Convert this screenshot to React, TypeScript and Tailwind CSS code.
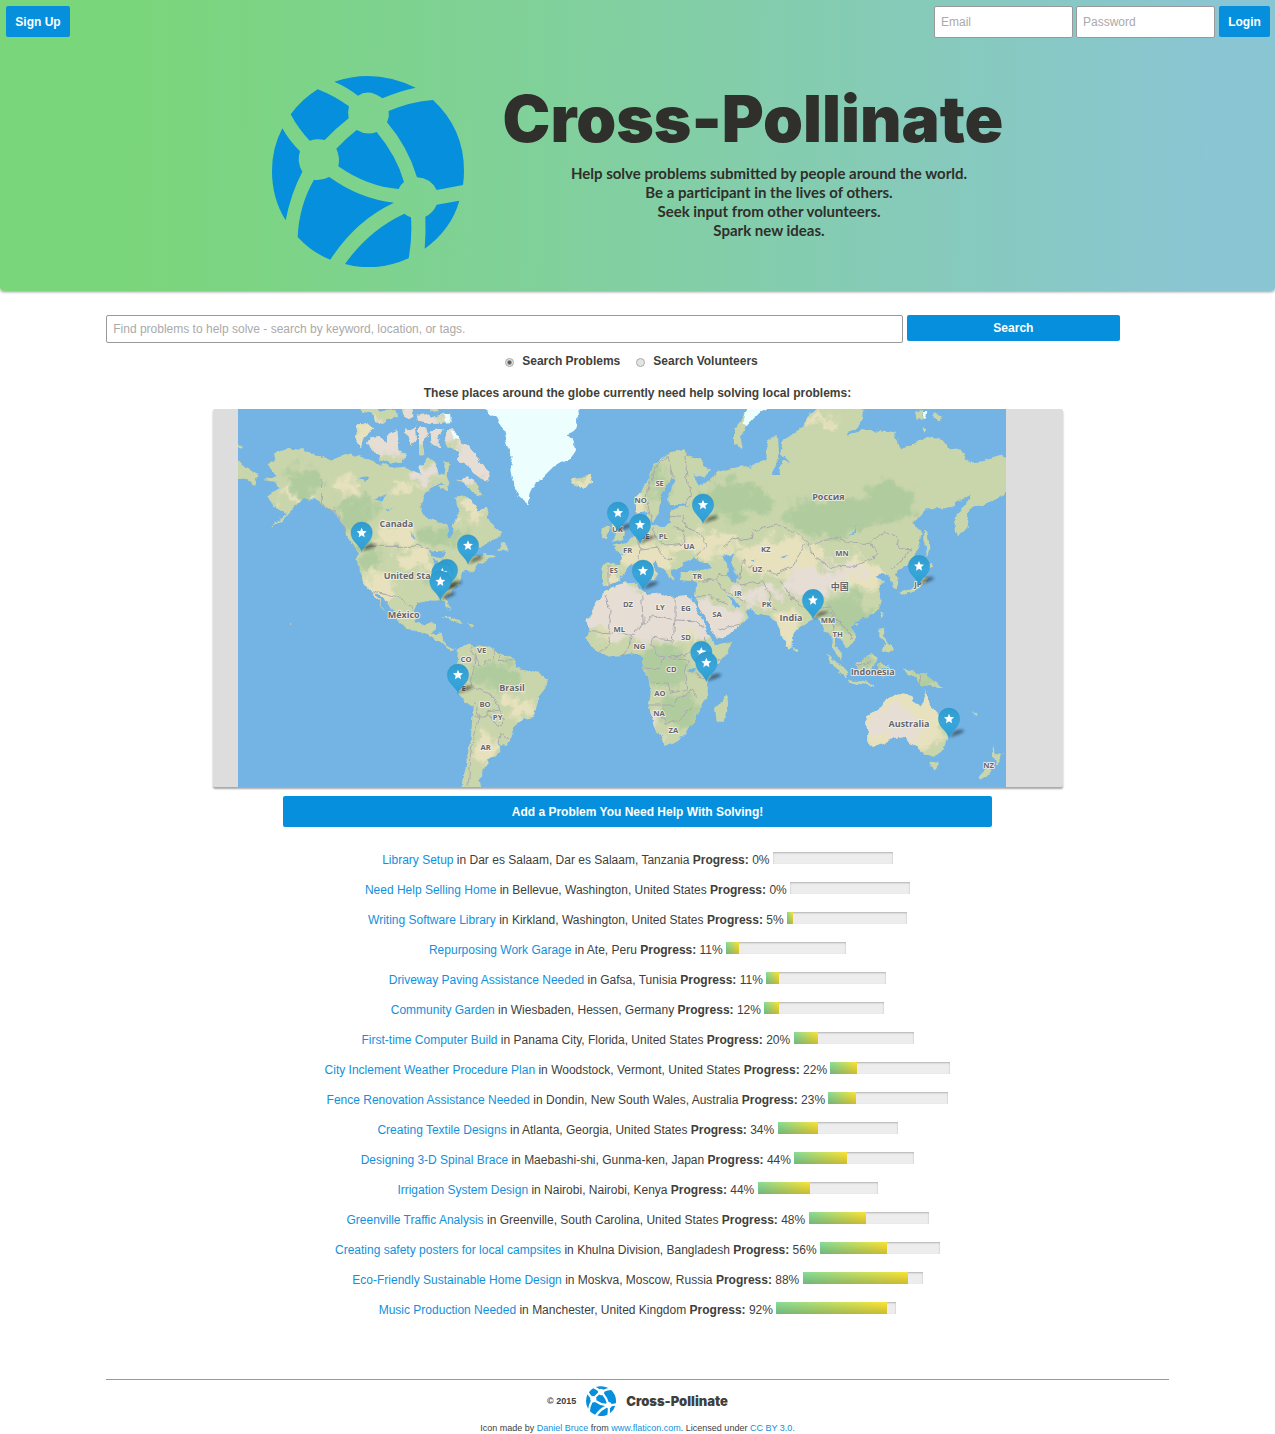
import React from "react";

type Pt = [number, number];

/* ---------- Logo ---------- */

function Globe({ className }: { className?: string }) {
  return (
    <svg viewBox="36 44 576 576" className={className} fill="#058fdd" aria-hidden="true">
      <path d="M223 64Q345 22 467 82Q415 93 367 114Q326 84 294 106Q262 81 223 64Z" />
      <path d="M173 87Q222 106 267 138Q262 155 266 174Q228 204 194 239Q171 234 149 241Q116 207 92 162Q126 116 173 87Z" />
      <path d="M67 204Q88 242 120 273Q109 304 127 334Q92 401 77 480Q36 415 36 332Q36 263 67 204Z" />
      <path d="M519 119Q612 205 612 332Q612 353 609 374L530 389Q512 353 471 351Q444 260 381 186Q389 169 386 152Q452 124 519 119Z" />
      <path d="M290 209Q320 227 350 215Q410 287 432 365Q422 372 416 386Q322 379 235 318Q241 291 229 265Q257 235 290 209Z" />
      <path d="M208 350Q299 416 402 427Q287 480 211 598Q156 577 113 530Q117 436 162 358Q186 361 208 350Z" />
      <path d="M433 460Q443 468 453 471Q457 534 446 594Q350 637 255 611Q326 510 433 460Z" />
      <path d="M530 433L598 421Q574 507 494 565Q498 518 496 469Q520 457 530 433Z" />
    </svg>
  );
}

/* ---------- World map ---------- */

const OFF: Record<string, Pt> = {
  a: [0, 0],
  b: [0, 570],
  c: [954, 0],
  d: [1764, 0],
  e: [1044, 570],
  f: [1764, 570],
};

// "a:x,y x,y b:x,y ..." - a letter moves to that map sheet's origin.
function shape(source: string, close = true) {
  let off = OFF.a;
  const out = source.trim().split(/\s+/).map((tok) => {
    let t = tok;
    if (/^[a-f]:/.test(t)) {
      off = OFF[t[0]];
      t = t.slice(2);
    }
    const [x, y] = t.split(",").map(Number);
    return `${x + off[0]} ${y + off[1]}`;
  });
  return "M" + out.join("L") + (close ? "Z" : "");
}

const LAND = [
  "a:165,190 190,180 182,168 200,155 230,143 265,150 300,160 330,170 360,182 380,172 412,160 430,170 470,178 500,190 540,205 580,200 610,215 632,222 620,205 650,175 672,190 680,225 700,222 690,180 712,195 702,235 712,258 680,250 655,262 640,280 625,320 640,350 680,365 705,380 710,415 722,415 725,375 738,345 728,290 760,285 785,310 800,335 820,318 838,370 870,395 868,415 820,430 795,448 780,470 820,462 850,472 800,492 785,510 750,520 745,545 720,570 698,590 b:702,20 718,60 705,52 695,30 660,32 615,40 605,60 612,95 640,110 660,92 672,98 660,128 692,132 700,165 720,176 738,178 715,184 690,160 670,145 640,130 600,122 560,95 555,80 525,30 500,15 490,10 515,60 525,78 505,45 478,0 a:480,575 450,540 437,500 437,460 430,440 400,400 390,360 350,325 320,305 275,290 245,325 215,360 170,385 225,340 190,325 165,290 200,265 185,245 160,240 190,225",
  "b:738,180 750,165 770,155 790,165 830,170 850,185 880,195 905,210 910,232 950,240 985,252 1005,270 1000,295 980,320 975,350 965,378 935,385 915,400 905,430 890,455 880,468 858,462 865,485 850,500 825,505 830,520 812,535 810,560 800,570 808,620 750,620 755,560 760,540 765,500 775,460 780,400 782,350 750,330 735,300 712,260 715,240 735,210",
  "c:220,550 215,520 220,490 270,492 275,465 248,440 285,430 300,420 320,400 340,385 355,378 350,345 362,345 364,375 400,380 425,365 425,345 415,332 440,322 480,318 450,312 420,312 415,280 438,240 422,235 395,285 390,325 380,345 370,365 357,350 345,330 320,338 315,295 345,260 375,190 420,160 460,148 470,165 510,180 540,215 515,235 490,225 510,262 550,235 560,215 600,205 640,200 690,190 712,175 715,120 740,105 745,170 725,225 748,225 752,185 778,188 750,160 760,120 810,90 d:20,50 80,0 190,0 190,60 140,105 190,90 260,100 285,95 300,145 345,130 380,110 430,120 450,145 490,155 500,185 550,180 600,165 650,185 650,255 612,285 580,300 545,320 520,320 505,345 500,380 475,415 463,380 470,340 500,310 515,285 490,295 450,325 380,325 340,370 365,400 355,440 330,490 290,515 280,520 295,545 290,565 278,560 270,525 245,515 230,530 252,545 235,560 245,600 f:235,60 205,80 170,90 150,105 165,135 160,160 140,175 130,150 105,140 105,165 125,190 128,215 110,195 95,165 95,130 75,125 60,95 45,85 e:745,95 710,120 695,145 695,175 685,178 665,140 650,95 640,90 615,75 570,60 555,65 520,25 500,15 530,55 545,50 568,80 545,105 500,135 470,148 455,115 430,75 412,45 410,20 c:495,590 500,545 450,540 448,520 510,510 540,505 525,485 500,480 490,470 475,480 455,500 425,510 430,545 410,520 375,480 365,492 385,525 370,545 345,500 325,485 290,500 270,540 235,555",
  "e:130,5 150,-5 195,-20 235,-22 240,-5 262,15 300,10 330,22 380,15 395,25 410,60 430,100 455,150 465,165 515,155 500,190 470,225 440,270 445,325 415,355 410,385 390,410 370,440 345,460 312,467 303,440 285,410 265,345 272,310 265,265 245,230 248,200 220,190 185,195 140,200 100,175 78,145 85,120 80,90 110,40",
  "e:500,313 508,335 490,395 470,395 465,355 480,340",
  "f:195,380 240,360 255,335 300,310 340,315 338,335 365,350 377,300 390,345 420,380 445,420 440,450 425,490 400,498 370,495 355,470 335,465 315,440 270,450 235,465 205,468 205,430",
  "f:308,235 340,245 380,255 410,275 430,297 385,285 370,290 350,265 320,250",
  "f:78,195 95,200 118,222 145,250 140,268 110,240",
  "f:145,270 180,274 220,282 218,288 150,278",
  "f:165,225 200,205 218,188 230,205 215,245 180,240",
  "f:235,225 272,226 248,234 256,262 246,262 242,245 234,258",
  "f:238,115 250,115 250,140 275,175 268,190 250,182 258,160 238,140",
  "f:238,70 246,66 242,88",
  "f:160,100 175,96 172,108",
  "e:697,168 710,182 702,190",
  "d:300,582 335,562 362,548 370,530 385,535 365,562 330,575 308,590",
  "d:372,388 382,395 388,440 382,468 374,440",
  "d:372,505 395,488 400,498 380,512",
  "d:345,35 365,30 372,55 350,60",
  "d:400,40 430,52 415,60 400,52",
  "d:365,82 382,90 368,98",
  "f:395,515 415,518 405,542 395,530",
  "f:573,470 590,490 608,492 590,520 582,510",
  "f:560,535 575,540 560,560 540,572 532,565",
  "c:250,350 268,352 262,370 288,405 282,418 245,425 255,405 245,380",
  "c:215,385 240,378 235,410 213,412",
  "c:122,235 150,232 180,228 190,245 160,270 135,262",
  "c:330,482 338,482 336,515 330,510",
  "a:468,130 478,112 505,108 520,130 535,95 556,88 562,150 584,165 560,185 530,192 500,180 505,160 475,150",
  "a:435,70 460,70 487,85 455,112 447,142 432,125",
  "a:448,15 490,15 500,35 550,30 556,48 515,68 490,60 478,40 450,35",
  "a:578,85 600,92 608,82 612,115 598,138 590,112 576,100",
  "a:618,82 645,80 650,105 635,125 640,165 618,168",
  "a:656,100 670,86 690,88 680,110 688,145 660,138",
  "a:700,92 725,88 742,115 752,130 775,138 792,165 808,195 832,215 832,242 805,235 780,215 765,190 740,182 735,158 710,140 695,112",
  "a:735,240 765,232 785,242 815,285 806,290 780,278 760,252",
  "a:615,45 640,40 655,50 695,38 722,62 690,68 650,68 618,62",
  "a:565,15 600,15 604,50 590,58 575,45",
  "a:650,15 680,15 676,34 655,32",
  "a:678,255 700,250 712,270 690,268",
  "a:78,185 110,210 140,230 125,255 100,235 60,240 60,180",
  "a:60,137 92,137 92,145 60,146",
  "a:855,450 878,420 890,455",
  "b:690,82 715,80 752,98 735,98 712,88",
  "b:765,103 790,108 775,114",
  "b:230,98 238,102 234,106",
  "f:512,362 534,374 530,378",
  "c:612,90 640,50 665,10 705,10 650,75 630,110 640,150 612,130",
].map((s) => shape(s)).join("");

const ICE = [
  "a:790,0 820,27 855,50 870,80 880,120 890,150 905,170 895,210 905,260 920,290 950,315 c:0,290 10,260 40,230 70,200 110,185 130,160 135,150 130,120 110,100 135,90 145,60 140,0",
  "a:695,42 714,42 716,62 698,62",
  "c:655,10 730,10 672,55 648,80 640,66",
  "a:715,94 735,98 742,118 728,115",
  "d:368,36 382,36 376,58",
].map((s) => shape(s)).join("");

const WATER = [
  "c:580,470 610,460 600,490 625,530 615,550 595,530 590,490",
  "a:440,235 475,225 468,245",
  "a:485,298 525,282 505,305",
  "a:520,330 545,325 525,335",
  "a:595,390 608,420 600,415",
  "a:650,450 700,455 690,475 660,468",
  "a:665,478 678,482 670,520",
  "a:690,478 715,500 700,505",
  "d:170,370 165,395 138,415 160,395",
  "e:388,235 404,230 402,246 390,245",
  "c:745,468 780,462 760,472",
  "c:662,478 680,476 670,486",
].map((s) => shape(s)).join("");

const BORDERS = [
  "a:328,165 328,310 380,345 400,400",
  "a:437,439 622,439 660,450",
  "a:480,575 555,590 b:575,30 605,60",
  "b:785,165 775,190 790,200 785,235 775,290",
  "b:845,175 840,205 800,225 790,190",
  "b:870,190 862,215 900,212",
  "b:775,290 810,300 850,325 860,360 830,365 825,378 785,378",
  "b:860,360 880,390 858,410 830,375",
  "b:858,462 865,430 890,445",
  "b:788,340 800,380 785,450 775,520 768,590",
  "e:135,15 150,60 145,128 215,135 250,105 245,20",
  "e:345,20 345,90 280,75 250,105",
  "e:345,90 340,150 280,145 275,165 300,200 370,200 430,165 435,140",
  "e:345,90 405,92 430,110",
  "e:80,125 145,128",
  "e:215,135 200,180 190,195",
  "e:145,128 150,160 120,190",
  "e:248,235 300,235 310,205 385,210 375,250 380,300 330,310 325,280 270,275",
  "e:265,345 340,345 350,325 400,300 410,320",
  "e:312,400 312,350",
  "e:315,400 345,395 375,375 400,350",
  "e:430,165 440,200 480,210",
  "e:385,240 440,270",
  "c:365,365 350,300 360,240 385,190 415,170 430,235",
  "c:465,165 470,220 480,290 465,315",
  "c:425,345 460,350 470,385 510,400 530,440 500,465",
  "c:370,385 375,415 410,435 460,430 465,390 430,380",
  "c:320,410 330,450 380,445 400,470 430,480",
  "c:330,450 325,475",
  "c:240,560 240,495",
  "c:580,440 610,415 660,420 665,395 740,375 800,400 d:30,440",
  "c:625,540 640,480 660,500 740,520 790,500 d:10,435",
  "c:505,545 550,540 570,520 600,530 630,555 700,545",
  "c:560,540 580,570 640,600 e:560,45",
  "c:700,545 720,590 e:620,50 650,60",
  "d:20,440 60,425 100,410 160,430 210,430 230,465 160,505 90,500 50,475 20,440",
  "d:210,430 250,395 285,410 300,445 330,450 300,490 270,510",
  "d:-60,540 -20,600 30,630 90,620 110,650",
  "f:90,70 115,90 150,130 155,150",
  "f:95,70 100,130",
  "e:410,20 450,20 500,40",
  "e:475,120 540,105",
  "f:170,228 215,210",
  "f:362,255 362,285",
].map((s) => shape(s, false)).join("");

const DESERT: [number, number, number, number][] = [
  [1310, 640, 190, 85], [1510, 660, 90, 60], [1800, 560, 80, 40], [1860, 515, 120, 20],
  [2050, 970, 80, 50], [530, 120, 60, 50], [640, 90, 90, 60], [640, 225, 40, 25],
  [790, 170, 60, 80], [1330, 960, 15, 45], [1640, 585, 80, 20],
];
const SAND: [number, number, number, number][] = [
  [560, 415, 70, 28], [620, 480, 50, 35], [400, 260, 35, 22], [820, 1050, 35, 40],
  [1470, 430, 120, 30], [1300, 480, 80, 50], [1700, 470, 120, 60], [1720, 680, 45, 60],
  [2050, 960, 140, 110], [1950, 520, 60, 60], [1180, 560, 60, 30], [920, 920, 40, 35],
  [1340, 712, 200, 10], [260, 290, 60, 12], [500, 560, 50, 40], [1240, 310, 50, 50],
  [460, 95, 30, 50], [570, 260, 40, 12], [780, 330, 30, 40], [1115, 250, 30, 20],
  [1820, 65, 50, 14],
];
const GREEN: [number, number, number, number][] = [
  [270, 240, 60, 35], [430, 330, 60, 50], [690, 400, 70, 30], [700, 540, 50, 40],
  [850, 830, 75, 40], [1360, 800, 80, 60], [1560, 300, 110, 55], [1850, 350, 130, 60],
  [2030, 310, 80, 60], [1900, 640, 70, 50], [1400, 930, 60, 50], [1340, 250, 30, 50],
  [2140, 835, 50, 20], [1970, 800, 40, 20], [470, 480, 30, 50],
];

const LABELS: [string, number, number, boolean][] = [
  ["Canada", 553, 382, true], ["United States", 606, 537, true], ["México", 575, 653, true],
  ["Brasil", 900, 872, true], ["Россия", 1849, 301, true], ["India", 1737, 663, true],
  ["Indonesia", 1982, 826, true], ["Australia", 2091, 981, true], ["中国", 1883, 569, true],
  ["VE", 809, 760, false], ["CO", 762, 785, false], ["PE", 748, 873, false], ["BO", 819, 920, false],
  ["PY", 857, 961, false], ["AR", 821, 1050, false], ["SE", 1343, 258, false], ["NO", 1286, 310, false],
  ["UK", 1216, 395, false], ["DE", 1298, 417, false], ["PL", 1354, 417, false], ["FR", 1247, 460, false],
  ["UA", 1431, 446, false], ["ES", 1205, 519, false], ["TR", 1456, 537, false], ["KZ", 1661, 456, false],
  ["UZ", 1635, 515, false], ["IR", 1578, 589, false], ["MN", 1890, 469, false], ["JP", 2118, 562, false],
  ["DZ", 1248, 621, false], ["LY", 1345, 629, false], ["EG", 1422, 633, false], ["SA", 1515, 651, false],
  ["ML", 1222, 696, false], ["NG", 1282, 748, false], ["SD", 1422, 720, false], ["CD", 1378, 817, false],
  ["AO", 1344, 888, false], ["NA", 1341, 948, false], ["ZA", 1384, 999, false], ["PK", 1664, 621, false],
  ["MM", 1848, 670, false], ["TH", 1877, 711, false], ["NZ", 2330, 1104, false],
];

const PINS: Pt[] = [
  [2121, 498], [1473, 314], [1218, 338], [1284, 374], [449, 398], [768, 436], [705, 510],
  [691, 518], [1293, 512], [685, 544], [1803, 600], [1468, 756], [1483, 788], [738, 824], [2211, 956],
];

function Pin({ at: [x, y] }: { at: Pt }) {
  return (
    <g transform={`translate(${x} ${y})`}>
      <path d="M0 56L18 36Q40 30 46 36Q42 44 0 56Z" fill="#111" opacity=".5" filter="url(#pinShadow)" />
      <path d="M0 56C-6 36-32 26-32 0A32 32 0 0 1 32 0C32 26 6 36 0 56Z" fill="url(#pinFill)" stroke="#2a8fc4" strokeWidth="1" />
      <path d="M0-15L4-5L15-4L7 3L9 14L0 8L-9 14L-7 3L-15-4L-4-5Z" fill="#fff" />
    </g>
  );
}

function Blobs({ data, fill }: { data: [number, number, number, number][]; fill: string }) {
  return (
    <g fill={fill}>
      {data.map(([cx, cy, rx, ry], i) => (
        <ellipse key={i} cx={cx} cy={cy} rx={rx} ry={ry} />
      ))}
    </g>
  );
}

function WorldMap() {
  return (
    <svg viewBox="78 27 2304 1134" className="block w-[768px] shrink-0" role="img" aria-label="World map of open problems">
      <defs>
        <clipPath id="landClip"><path d={LAND} /></clipPath>
        <filter id="coast" x="0" y="0" width="100%" height="100%">
          <feTurbulence type="fractalNoise" baseFrequency="0.035" numOctaves="3" seed="4" />
          <feDisplacementMap in="SourceGraphic" scale="20" xChannelSelector="R" yChannelSelector="G" />
        </filter>
        <filter id="terrain" x="-5%" y="-5%" width="110%" height="110%">
          <feGaussianBlur in="SourceGraphic" stdDeviation="7" result="soft" />
          <feTurbulence type="fractalNoise" baseFrequency="0.02" numOctaves="4" seed="9" />
          <feDisplacementMap in="soft" scale="90" xChannelSelector="R" yChannelSelector="G" />
        </filter>
        <filter id="pinShadow" x="-30%" y="-50%" width="160%" height="200%"><feGaussianBlur stdDeviation="4" /></filter>
        <linearGradient id="pinFill" x1="0" y1="0" x2="0" y2="1">
          <stop offset="0" stopColor="#2f9bcd" />
          <stop offset=".5" stopColor="#38a6da" />
          <stop offset="1" stopColor="#2c9dd3" />
        </linearGradient>
      </defs>
      <rect x="78" y="27" width="2304" height="1134" fill="#73b4e4" />
      <g filter="url(#coast)">
        <path d={LAND} fill="#c9d5ab" />
        <g clipPath="url(#landClip)">
          <g filter="url(#terrain)">
            <Blobs data={GREEN} fill="#b0cc9f" />
            <Blobs data={SAND} fill="#e7e2bd" />
            <Blobs data={DESERT} fill="#e6ddd5" />
          </g>
        </g>
        <path d={ICE} fill="#ecfffe" />
        <path d={WATER} fill="#73b4e4" />
      </g>
      <g filter="url(#coast)">
        <path d={BORDERS} fill="none" stroke="#a9a9ad" strokeWidth="3" />
      </g>
      <g
        className="font-['Open_Sans','Noto_Sans_CJK_SC',sans-serif] font-bold"
        fill="#66666b"
        stroke="#f4f2ea"
        strokeWidth="5"
        strokeLinejoin="round"
        paintOrder="stroke"
        textAnchor="middle"
      >
        {LABELS.map(([text, x, y, big]) => (
          <text key={text} x={x} y={y} fontSize={big ? 27 : 23}>{text}</text>
        ))}
      </g>
      {PINS.map((p, i) => <Pin key={i} at={p} />)}
    </svg>
  );
}

/* ---------- Page ---------- */

const PROBLEMS: [string, string, number][] = [
  ["Library Setup", "Dar es Salaam, Dar es Salaam, Tanzania", 0],
  ["Need Help Selling Home", "Bellevue, Washington, United States", 0],
  ["Writing Software Library", "Kirkland, Washington, United States", 5],
  ["Repurposing Work Garage", "Ate, Peru", 11],
  ["Driveway Paving Assistance Needed", "Gafsa, Tunisia", 11],
  ["Community Garden", "Wiesbaden, Hessen, Germany", 12],
  ["First-time Computer Build", "Panama City, Florida, United States", 20],
  ["City Inclement Weather Procedure Plan", "Woodstock, Vermont, United States", 22],
  ["Fence Renovation Assistance Needed", "Dondin, New South Wales, Australia", 23],
  ["Creating Textile Designs", "Atlanta, Georgia, United States", 34],
  ["Designing 3-D Spinal Brace", "Maebashi-shi, Gunma-ken, Japan", 44],
  ["Irrigation System Design", "Nairobi, Nairobi, Kenya", 44],
  ["Greenville Traffic Analysis", "Greenville, South Carolina, United States", 48],
  ["Creating safety posters for local campsites", "Khulna Division, Bangladesh", 56],
  ["Eco-Friendly Sustainable Home Design", "Moskva, Moscow, Russia", 88],
  ["Music Production Needed", "Manchester, United Kingdom", 92],
];

const BUTTON = "rounded-xs bg-[#058fdd] font-bold text-white";
const FIELD = "rounded-xs border border-[#999] bg-white px-1.5 placeholder:text-[#aaa]";
const RADIO =
  "relative top-px mr-2 size-[9px] appearance-none rounded-full border border-[#aaa] bg-[#e4e4e4] checked:bg-[radial-gradient(circle,#555_0_1px,#e4e4e4_3px)]";

export default function App() {
  return (
    <div className="bg-white font-['Liberation_Sans',Arial,sans-serif] text-xs text-[#40403a]">
      <header className="rounded-b bg-[linear-gradient(91deg,#7ad67a_10%,#82cfa2_50%,#8ac5d4_96%)] pb-6 shadow-[0_1px_3px_rgba(0,0,0,0.4)]">
        <div className="flex justify-between p-1.5 pr-[5px]">
          <button className={`${BUTTON} h-[31px] w-16`}>Sign Up</button>
          <form className="flex gap-[3px]" onSubmit={(e) => e.preventDefault()}>
            <input type="email" aria-label="Email" placeholder="Email" className={`${FIELD} h-8 w-[139px]`} />
            <input type="password" aria-label="Password" placeholder="Password" className={`${FIELD} h-8 w-[139px]`} />
            <button className={`${BUTTON} ml-px h-[31px] w-[51px]`}>Login</button>
          </form>
        </div>
        <div className="flex justify-center gap-[39px] pt-[31px] text-[#2f2f2b]">
          <Globe className="size-48" />
          <div className="pt-2 text-center">
            <h1 className="font-['Inter',sans-serif] text-[64px] leading-[72px] font-black">Cross-Pollinate</h1>
            <p className="pt-[9px] pl-8 font-['Lato',sans-serif] text-[15px] leading-[19px] font-bold">
              Help solve problems submitted by people around the world.<br />
              Be a participant in the lives of others.<br />
              Seek input from other volunteers.<br />
              Spark new ideas.
            </p>
          </div>
        </div>
      </header>

      <main className="mx-auto w-10/12 pt-6">
        <form onSubmit={(e) => e.preventDefault()}>
          <div className="flex items-start gap-1">
            <input
              type="search"
              aria-label="Search"
              placeholder="Find problems to help solve - search by keyword, location, or tags."
              className={`${FIELD} h-7 w-3/4`}
            />
            <button className={`${BUTTON} h-[26px] w-1/5`}>Search</button>
          </div>
          <div className="flex justify-center gap-4 pt-2.5 pr-3 leading-4 font-bold">
            <label className="flex items-center"><input type="radio" name="kind" defaultChecked className={RADIO} />Search Problems</label>
            <label className="flex items-center"><input type="radio" name="kind" className={RADIO} />Search Volunteers</label>
          </div>
        </form>

        <h2 className="pt-4 pb-2 text-center leading-4 font-bold">
          These places around the globe currently need help solving local problems:
        </h2>
        <div className="mx-auto flex w-4/5 overflow-hidden rounded-xs bg-[#ddd] pl-[25px] shadow-[0_2px_2px_rgba(0,0,0,0.35)]">
          <WorldMap />
        </div>
        <button className={`${BUTTON} mx-auto mt-[9px] block h-[31px] w-2/3`}>Add a Problem You Need Help With Solving!</button>

        <ul className="pt-[18px] text-center">
          {PROBLEMS.map(([title, place, pct]) => (
            <li key={title} className="h-[30px] leading-[30px]">
              <a href="#problem" className="text-[#1190dc]">{title}</a> in {place} <b>Progress:</b> {pct}%{" "}
              <progress
                value={pct}
                max={100}
                aria-label={`${title} progress`}
                className="inline-block h-3 w-[120px] appearance-none align-baseline [&::-webkit-progress-bar]:bg-[#ededed] [&::-webkit-progress-bar]:shadow-[inset_0_1px_2px_rgba(0,0,0,0.25)] [&::-webkit-progress-value]:bg-[linear-gradient(to_bottom,transparent,rgba(0,0,0,0.18)),linear-gradient(to_right,#88dd98,#fbe436)]"
              />
            </li>
          ))}
        </ul>

        <footer className="mt-[54px] border-t border-[#999] pt-1.5 text-center text-[9px]">
          <div className="flex items-center justify-center gap-2.5 leading-[30px] font-bold">
            <span>© 2015</span>
            <Globe className="size-[30px]" />
            <span className="font-['Inter',sans-serif] text-[13px] font-black">Cross-Pollinate</span>
          </div>
          <p className="py-1.5 leading-3">
            Icon made by <a href="#author" className="text-[#1190dc]">Daniel Bruce</a> from{" "}
            <a href="#flaticon" className="text-[#1190dc]">www.flaticon.com</a>. Licensed under{" "}
            <a href="#license" className="text-[#1190dc]">CC BY 3.0.</a>
          </p>
        </footer>
      </main>
    </div>
  );
}
